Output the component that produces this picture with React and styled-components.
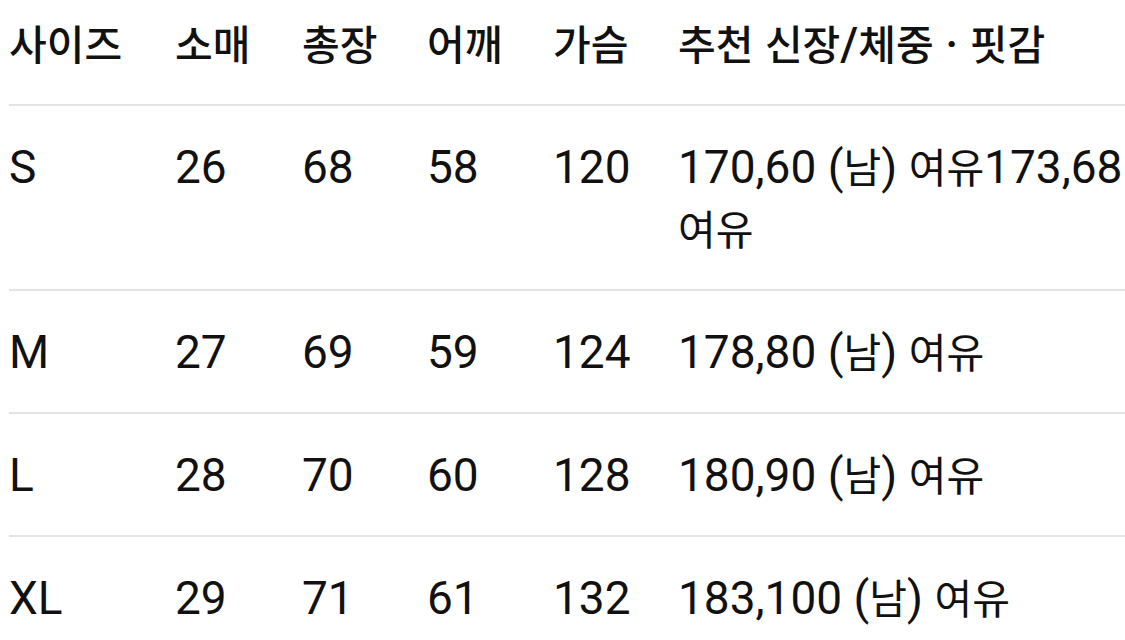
import React from 'react';
import styled, { createGlobalStyle } from 'styled-components';

const Global = createGlobalStyle`
  html, body { margin: 0; padding: 0; background: #ffffff; overflow: hidden; }
  body {
    font-family: Roboto, "Noto Sans CJK KR", sans-serif;
    color: #111111;
    -webkit-font-smoothing: antialiased;
  }
`;

const Table = styled.div`
  margin-left: 9px;
  width: 1140px;
`;

const Row = styled.div`
  display: grid;
  grid-template-columns: 166px 127px 125px 126px 125px 460px;
  padding: ${p => (p.$head ? '13px 0 29px' : '30px 0 29px')};
  border-bottom: 2px solid #e4e4e4;
  font-size: 46px;
  line-height: 62px;
  font-weight: ${p => (p.$head ? 500 : 400)};
`;

const Cell = styled.div`
  min-width: 0;
  white-space: normal;
  word-break: keep-all;
`;

const Ko = styled.span`
  font-family: "Noto Sans CJK KR", sans-serif;
  font-size: 41px;
  line-height: 1;
`;

const renderText = text =>
  text.split(/([\uac00-\ud7a3]+)/).map((part, i) =>
    /[\uac00-\ud7a3]/.test(part) ? <Ko key={i}>{part}</Ko> : part
  );

const header = ['사이즈', '소매', '총장', '어깨', '가슴', '추천 신장/체중 · 핏감'];

const rows = [
  ['S', '26', '68', '58', '120', '170,60 (남) 여유173,68 여유'],
  ['M', '27', '69', '59', '124', '178,80 (남) 여유'],
  ['L', '28', '70', '60', '128', '180,90 (남) 여유'],
  ['XL', '29', '71', '61', '132', '183,100 (남) 여유'],
];

export default function App() {
  return (
    <>
      <Global />
      <Table>
        <Row $head>
          {header.map((h, i) => (
            <Cell key={i}>{renderText(h)}</Cell>
          ))}
        </Row>
        {rows.map(r => (
          <Row key={r[0]}>
            {r.map((c, i) => (
              <Cell key={i}>{renderText(c)}</Cell>
            ))}
          </Row>
        ))}
      </Table>
    </>
  );
}
